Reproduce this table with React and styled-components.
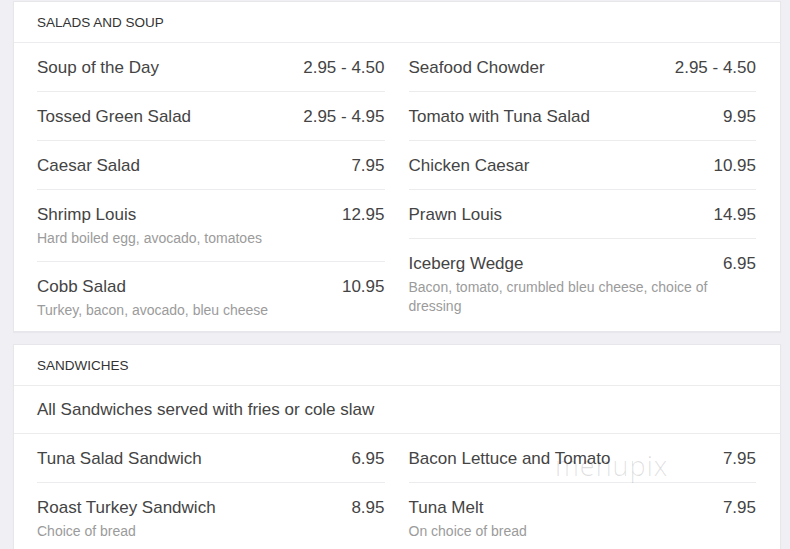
import React from "react";
import styled, { createGlobalStyle } from "styled-components";

const GlobalStyle = createGlobalStyle`
  html, body {
    margin: 0;
    padding: 0;
    background: #efeff4;
    font-family: "Liberation Sans", Arial, sans-serif;
  }
`;

const menu = [
  {
    title: "SALADS AND SOUP",
    columns: [
      [
        { name: "Soup of the Day", price: "2.95 - 4.50" },
        { name: "Tossed Green Salad", price: "2.95 - 4.95" },
        { name: "Caesar Salad", price: "7.95" },
        { name: "Shrimp Louis", price: "12.95", desc: "Hard boiled egg, avocado, tomatoes" },
        { name: "Cobb Salad", price: "10.95", desc: "Turkey, bacon, avocado, bleu cheese" },
      ],
      [
        { name: "Seafood Chowder", price: "2.95 - 4.50" },
        { name: "Tomato with Tuna Salad", price: "9.95" },
        { name: "Chicken Caesar", price: "10.95" },
        { name: "Prawn Louis", price: "14.95" },
        { name: "Iceberg Wedge", price: "6.95", desc: "Bacon, tomato, crumbled bleu cheese, choice of dressing" },
      ],
    ],
  },
  {
    title: "SANDWICHES",
    note: "All Sandwiches served with fries or cole slaw",
    watermark: true,
    columns: [
      [
        { name: "Tuna Salad Sandwich", price: "6.95" },
        { name: "Roast Turkey Sandwich", price: "8.95", desc: "Choice of bread" },
      ],
      [
        { name: "Bacon Lettuce and Tomato", price: "7.95" },
        { name: "Tuna Melt", price: "7.95", desc: "On choice of bread" },
      ],
    ],
  },
];

const Page = styled.div`
  display: flex;
  flex-direction: column;
  gap: 12px;
  padding: 1px 9px 0 13px;
`;

const Card = styled.section`
  position: relative;
  background: #fff;
  border: 1px solid #e6e6eb;
  box-shadow: 0 1px 1px rgba(0, 0, 0, 0.03);
`;

const Header = styled.div`
  height: 40px;
  display: flex;
  align-items: center;
  padding: 0 23px;
  font-size: 13.5px;
  color: #333;
  border-bottom: 1px solid #ececef;
`;

const Note = styled.div`
  padding: 14px 23px 13px;
  line-height: 20px;
  font-size: 17px;
  color: #444;
  border-bottom: 1px solid #ececef;
`;

const Grid = styled.div`
  display: grid;
  grid-template-columns: 1fr 1fr;
  column-gap: 24px;
  padding: 0 24px 0 23px;
  align-items: start;
`;

const Column = styled.div`
  display: flex;
  flex-direction: column;
`;

const Item = styled.div`
  padding: 15px 0 13px;
  border-bottom: 1px solid #ececef;
  &:last-child {
    border-bottom: none;
    padding-bottom: 11px;
  }
`;

const Line = styled.div`
  display: flex;
  justify-content: space-between;
  gap: 12px;
  font-size: 17px;
  line-height: 20px;
  color: #444;
`;

const Desc = styled.div`
  margin-top: 4px;
  padding-right: 24px;
  font-size: 14px;
  line-height: 19px;
  color: #9b9b9b;
`;

const Watermark = styled.div`
  position: absolute;
  left: 541px;
  top: 102px;
  font-family: "Open Sans", sans-serif;
  font-weight: 300;
  font-size: 27px;
  letter-spacing: 1px;
  color: rgba(0, 0, 0, 0.13);
  pointer-events: none;
`;

export default function App() {
  return (
    <>
      <GlobalStyle />
      <Page>
        {menu.map((section) => (
          <Card key={section.title}>
            <Header>{section.title}</Header>
            {section.note && <Note>{section.note}</Note>}
            <Grid>
              {section.columns.map((col, ci) => (
                <Column key={ci}>
                  {col.map((item) => (
                    <Item key={item.name}>
                      <Line>
                        <span>{item.name}</span>
                        <span>{item.price}</span>
                      </Line>
                      {item.desc && <Desc>{item.desc}</Desc>}
                    </Item>
                  ))}
                </Column>
              ))}
            </Grid>
            {section.watermark && <Watermark>menupix</Watermark>}
          </Card>
        ))}
      </Page>
    </>
  );
}
